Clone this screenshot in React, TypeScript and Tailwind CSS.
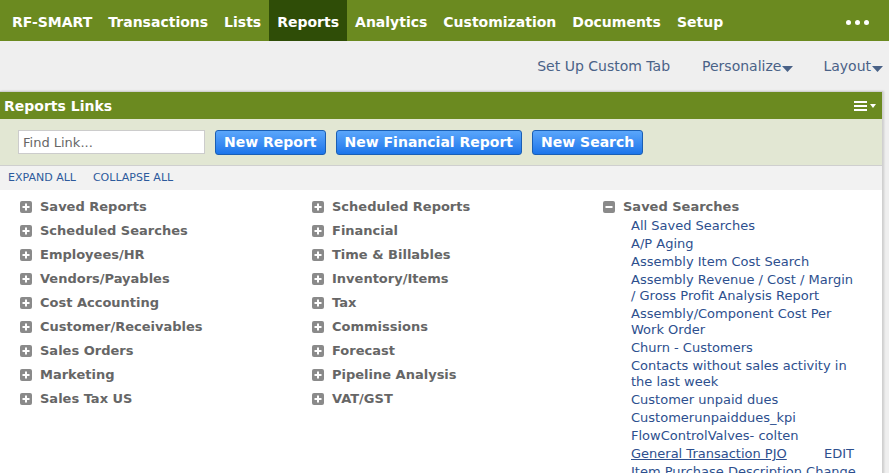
import React from "react";

const NAV = ["RF-SMART", "Transactions", "Lists", "Reports", "Analytics", "Customization", "Documents", "Setup"];

const COL1 = ["Saved Reports", "Scheduled Searches", "Employees/HR", "Vendors/Payables", "Cost Accounting", "Customer/Receivables", "Sales Orders", "Marketing", "Sales Tax US"];
const COL2 = ["Scheduled Reports", "Financial", "Time & Billables", "Inventory/Items", "Tax", "Commissions", "Forecast", "Pipeline Analysis", "VAT/GST"];

const SEARCHES = [
  "All Saved Searches",
  "A/P Aging",
  "Assembly Item Cost Search",
  "Assembly Revenue / Cost / Margin / Gross Profit Analysis Report",
  "Assembly/Component Cost Per Work Order",
  "Churn - Customers",
  "Contacts without sales activity in the last week",
  "Customer unpaid dues",
  "Customerunpaiddues_kpi",
  "FlowControlValves- colten",
];

const font = { fontFamily: '"DejaVu Sans", Verdana, sans-serif' };

const Toggle = ({ open }: { open?: boolean }) => (
  <svg width="12" height="12" viewBox="0 0 12 12" className="shrink-0">
    <rect x="0" y="0" width="12" height="12" rx="2" fill="#8a8a8a" />
    <rect x="2.5" y="5" width="7" height="2" fill="#fff" />
    {!open && <rect x="5" y="2.5" width="2" height="7" fill="#fff" />}
  </svg>
);

const Category = ({ label, open }: { label: string; open?: boolean }) => (
  <div className="flex items-center gap-[8px] h-[24px]">
    <Toggle open={open} />
    <span className="text-[13px] font-bold text-[#666]">{label}</span>
  </div>
);

const Caret = () => (
  <svg width="11" height="6" viewBox="0 0 11 6" className="ml-[1px] mt-[6px]">
    <path d="M0 0 H11 L5.5 6 Z" fill="#4a6287" />
  </svg>
);

const BlueButton = ({ children }: { children: React.ReactNode }) => (
  <button className="h-[25px] px-[8px] rounded-[3px] border border-[#1a5fb4] bg-gradient-to-b from-[#5aa6fb] to-[#1b75ea] text-white text-[14px] font-bold leading-none">
    {children}
  </button>
);

export default function App() {
  return (
    <div className="w-[889px] h-[473px] overflow-hidden bg-[#efefef]" style={font}>
      {/* Top navigation */}
      <nav className="flex items-stretch h-[41px] bg-[#6b8a20] pl-[4px] pr-[20px]">
        {NAV.map((item) => (
          <div
            key={item}
            className={`flex items-center pt-[3px] px-[8px] text-[14px] font-bold text-white ${item === "Reports" ? "bg-[#2f4d07]" : ""}`}
          >
            {item}
          </div>
        ))}
        <div className="ml-auto flex items-center gap-[4px] pt-[3px]">
          <span className="w-[5px] h-[5px] rounded-full bg-white" />
          <span className="w-[5px] h-[5px] rounded-full bg-white" />
          <span className="w-[5px] h-[5px] rounded-full bg-white" />
        </div>
      </nav>

      {/* Page actions */}
      <div className="flex items-center justify-end h-[47px] pt-[3px] pr-[6px] gap-[30px] text-[14px] text-[#4a6287]">
        <span className="mr-[2px]">Set Up Custom Tab</span>
        <span className="flex items-center">Personalize<Caret /></span>
        <span className="flex items-center">Layout<Caret /></span>
      </div>

      {/* Portlet */}
      <div className="mt-[3px] w-[883px] border-t border-r border-[#d0d0d0] bg-white shadow-[1px_0_2px_rgba(0,0,0,0.15)]">
        <div className="flex items-center justify-between h-[27px] bg-[#6b8a20] px-[4px] pt-[1px]">
          <span className="text-[14px] font-bold text-white">Reports Links</span>
          <div className="flex items-center gap-[3px] pr-[2px]">
            <div className="flex flex-col gap-[2px]">
              <span className="w-[13px] h-[2px] bg-white" />
              <span className="w-[13px] h-[2px] bg-white" />
              <span className="w-[13px] h-[2px] bg-white" />
            </div>
            <svg width="6" height="4" viewBox="0 0 6 4">
              <path d="M0 0 H6 L3 4 Z" fill="#fff" />
            </svg>
          </div>
        </div>

        <div className="flex items-center gap-[10px] h-[47px] bg-[#e2e7d3] pl-[18px] border-b border-[#cfcfcf]">
          <input
            placeholder="Find Link..."
            className="w-[187px] h-[24px] border border-[#ccc] bg-white px-[4px] text-[13px] text-[#333] placeholder:text-[#666] outline-none"
          />
          <BlueButton>New Report</BlueButton>
          <BlueButton>New Financial Report</BlueButton>
          <BlueButton>New Search</BlueButton>
        </div>

        <div className="flex items-center gap-[17px] h-[24px] pt-[1px] bg-[#f2f2f2] pl-[8px] text-[11px] text-[#2d5a9c]">
          <span>EXPAND ALL</span>
          <span>COLLAPSE ALL</span>
        </div>

        <div className="flex pt-[5px] pb-[10px]">
          <div className="w-[292px] pl-[20px]">
            {COL1.map((c) => (
              <Category key={c} label={c} />
            ))}
          </div>
          <div className="w-[291px] pl-[20px]">
            {COL2.map((c) => (
              <Category key={c} label={c} />
            ))}
          </div>
          <div className="flex-1 pl-[20px]">
            <Category label="Saved Searches" open />
            <div className="-mt-[1px] pl-[28px] pr-[25px] text-[13px] leading-[16px] text-[#2d4f8e]">
              {SEARCHES.map((s) => (
                <div key={s} className="mb-[2px]">{s}</div>
              ))}
              <div className="flex mb-[2px]">
                <span className="underline w-[193px]">General Transaction PJO</span>
                <span>EDIT</span>
              </div>
              <div className="whitespace-nowrap">Item Purchase Description Change</div>
            </div>
          </div>
        </div>
      </div>
    </div>
  );
}
